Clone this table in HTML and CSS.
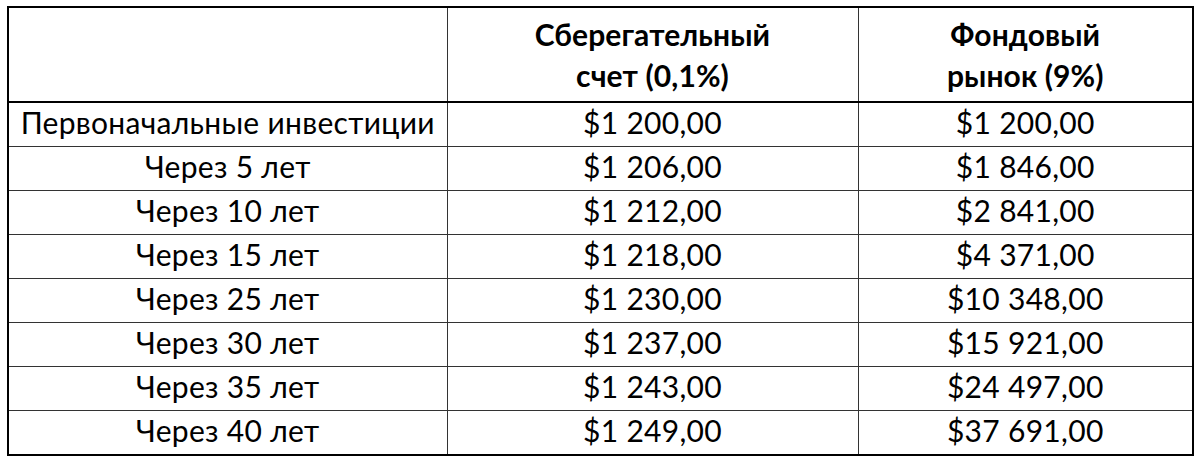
FILE: index.html
```html
<!DOCTYPE html>
<html lang="ru">
<head>
<meta charset="utf-8">
<link rel="stylesheet" href="styles.css">
</head>
<body>
<table class="grid">
  <colgroup>
    <col class="c1"><col class="c2"><col class="c3">
  </colgroup>
  <thead>
    <tr class="head">
      <th></th>
      <th>Сберегательный<br>счет (0,1%)</th>
      <th>Фондовый<br>рынок (9%)</th>
    </tr>
  </thead>
  <tbody>
    <tr><td>Первоначальные инвестиции</td><td>$1 200,00</td><td>$1 200,00</td></tr>
    <tr><td>Через 5 лет</td><td>$1 206,00</td><td>$1 846,00</td></tr>
    <tr><td>Через 10 лет</td><td>$1 212,00</td><td>$2 841,00</td></tr>
    <tr><td>Через 15 лет</td><td>$1 218,00</td><td>$4 371,00</td></tr>
    <tr><td>Через 25 лет</td><td>$1 230,00</td><td>$10 348,00</td></tr>
    <tr><td>Через 30 лет</td><td>$1 237,00</td><td>$15 921,00</td></tr>
    <tr><td>Через 35 лет</td><td>$1 243,00</td><td>$24 497,00</td></tr>
    <tr><td>Через 40 лет</td><td>$1 249,00</td><td>$37 691,00</td></tr>
  </tbody>
</table>
</body>
</html>
```
FILE: styles.css
```css
html, body {
  margin: 0;
  padding: 0;
  background: #ffffff;
}
body {
  padding: 6px 8px 0 7px;
  font-family: "Lato", "Open Sans", sans-serif;
  color: #000;
}
.grid {
  border-collapse: collapse;
  width: 1185px;
  border: 2px solid #000;
  table-layout: fixed;
}
.c1 { width: 439px; }
.c2 { width: 411px; }
.c3 { width: 335px; }
.grid th, .grid td {
  border: 1px solid #333;
  text-align: center;
  padding: 0;
  font-size: 30px;
  letter-spacing: 0.3px;
}
.grid th {
  font-weight: 700;
  line-height: 41px;
  height: 93px;
  border-bottom: 2px solid #000;
  letter-spacing: 0.1px;
}
.grid td {
  height: 37px;
  line-height: 36px;
  padding: 0 0 6px 0;
}
```
